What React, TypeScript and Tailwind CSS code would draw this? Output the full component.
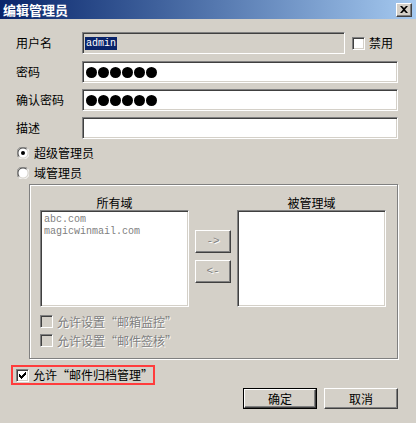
import React from 'react'

const sunken =
  'border border-t-[#808080] border-l-[#808080] border-r-white border-b-white shadow-[inset_1px_1px_0_#404040,inset_-1px_-1px_0_#d4d0c8]'
const raised =
  'border border-t-white border-l-white border-r-[#404040] border-b-[#404040] shadow-[inset_-1px_-1px_0_#808080,inset_1px_1px_0_#d4d0c8]'
const cjk = { fontFamily: '"Noto Sans CJK SC", "Liberation Sans", sans-serif' }
const mono = { fontFamily: '"Liberation Mono", monospace' }

function Checkbox({ checked, disabled }: { checked?: boolean; disabled?: boolean }) {
  return (
    <div className={`w-[13px] h-[13px] shrink-0 ${sunken} ${disabled ? 'bg-[#d4d0c8]' : 'bg-white'} flex items-center justify-center`}>
      {checked && (
        <svg width="7" height="7" viewBox="0 0 7 7">
          <path d="M0 2h1v1h1v1h1V3h1V2h1V1h1V0h1v3H6v1H5v1H4v1H3v1H2V6H1V5H0z" fill="#000" />
        </svg>
      )}
    </div>
  )
}

function Radio({ checked }: { checked?: boolean }) {
  return (
    <svg width="12" height="12" viewBox="0 0 12 12" className="shrink-0">
      <circle cx="6" cy="6" r="5.5" fill="#fff" />
      <path d="M1.6 10.4A6 6 0 0 1 10.4 1.6" stroke="#808080" strokeWidth="1" fill="none" />
      <path d="M2.4 9.6A4.8 4.8 0 0 1 9.6 2.4" stroke="#404040" strokeWidth="1" fill="none" />
      <path d="M10.4 1.6A6 6 0 0 1 1.6 10.4" stroke="#fff" strokeWidth="1" fill="none" />
      <path d="M9.6 2.4A4.8 4.8 0 0 1 2.4 9.6" stroke="#d4d0c8" strokeWidth="1" fill="none" />
      {checked && <circle cx="6" cy="6" r="2" fill="#000" />}
    </svg>
  )
}

function Dots() {
  return (
    <div className="flex gap-px pl-[3px]">
      {[0, 1, 2, 3, 4, 5].map((i) => (
        <span key={i} className="w-[11px] h-[11px] rounded-full bg-black" />
      ))}
    </div>
  )
}

function Row({ label, children, mt }: { label: string; children: React.ReactNode; mt: string }) {
  return (
    <div className={`flex items-center ${mt}`}>
      <span className="w-[66px] pl-[16px] box-content shrink-0 text-[12px] text-black" style={cjk}>
        {label}
      </span>
      {children}
    </div>
  )
}

export default function App() {
  return (
    <div className="w-[416px] h-[423px] bg-[#d4d0c8] overflow-hidden select-none" style={cjk}>
      <div className="h-[19px] flex items-center justify-between pl-[3px] pr-[4px] bg-gradient-to-r from-[#0a246a] to-[#a6caf0]">
        <span className="text-white font-bold text-[13px] leading-none">编辑管理员</span>
        <div className={`w-[16px] h-[14px] bg-[#d4d0c8] ${raised} flex items-center justify-center`}>
          <svg width="8" height="7" viewBox="0 0 8 7">
            <path d="M0 0h2l2 2 2-2h2L5 3.5 8 7H6L4 5 2 7H0l3-3.5z" fill="#000" />
          </svg>
        </div>
      </div>

      <div className="flex flex-col">
        <div className="flex items-center mt-[13px]">
          <Row label="用户名" mt="">
            <div className={`w-[263px] h-[22px] ${sunken} bg-[#d4d0c8] flex items-center pl-[2px]`}>
              <span className="bg-[#0a246a] text-white text-[10px] leading-[13px] px-px" style={mono}>
                admin
              </span>
            </div>
          </Row>
          <div className="ml-[7px] flex items-center gap-[4px]">
            <Checkbox />
            <span className="text-[12px]">禁用</span>
          </div>
        </div>
        <Row label="密码" mt="mt-[7px]">
          <div className={`w-[316px] h-[22px] ${sunken} bg-white flex items-center`}>
            <Dots />
          </div>
        </Row>
        <Row label="确认密码" mt="mt-[6px]">
          <div className={`w-[316px] h-[22px] ${sunken} bg-white flex items-center`}>
            <Dots />
          </div>
        </Row>
        <Row label="描述" mt="mt-[6px]">
          <div className={`w-[316px] h-[22px] ${sunken} bg-white`} />
        </Row>

        <div className="flex items-center gap-[5px] pl-[17px] mt-[6px] h-[16px]">
          <Radio checked />
          <span className="text-[12px]">超级管理员</span>
        </div>
        <div className="flex items-center gap-[5px] pl-[17px] mt-[4px] h-[16px]">
          <Radio />
          <span className="text-[12px]">域管理员</span>
        </div>

        <div className="ml-[29px] mt-[3px] w-[369px] h-[175px] border border-[#808080] shadow-[1px_1px_0_#fff,inset_1px_1px_0_#fff] pt-[10px] pl-[10px]">
          <div className="flex gap-[6px]">
            <div className="flex flex-col w-[149px]">
              <span className="text-[12px] leading-[15px] text-center">所有域</span>
              <div className={`h-[97px] ${sunken} bg-white px-[3px] pt-[3px] text-[10px] leading-[12px] text-[#808080]`} style={mono}>
                <div>abc.com</div>
                <div>magicwinmail.com</div>
              </div>
            </div>
            <div className="flex flex-col gap-[7px] pt-[35px] w-[36px]">
              <div className={`h-[23px] ${raised} bg-[#d4d0c8] flex items-center justify-center text-[11px] text-[#808080] [text-shadow:1px_1px_0_#fff]`} style={mono}>
                -&gt;
              </div>
              <div className={`h-[23px] ${raised} bg-[#d4d0c8] flex items-center justify-center text-[11px] text-[#808080] [text-shadow:1px_1px_0_#fff]`} style={mono}>
                &lt;-
              </div>
            </div>
            <div className="flex flex-col w-[149px]">
              <span className="text-[12px] leading-[15px] text-center">被管理域</span>
              <div className={`h-[97px] ${sunken} bg-white`} />
            </div>
          </div>
          <div className="flex items-center gap-[4px] mt-[8px] h-[13px]">
            <Checkbox disabled />
            <span className="text-[12px] text-[#808080] [text-shadow:1px_1px_0_#fff]">允许设置“邮箱监控”</span>
          </div>
          <div className="flex items-center gap-[4px] mt-[6px] h-[13px]">
            <Checkbox disabled />
            <span className="text-[12px] text-[#808080] [text-shadow:1px_1px_0_#fff]">允许设置“邮件签核”</span>
          </div>
        </div>

        <div className="ml-[11px] mt-[6px] w-[144px] h-[20px] border-2 border-[#ff3c3c] flex items-center gap-[4px] pl-[3px]">
          <Checkbox checked />
          <span className="text-[12px]">允许“邮件归档管理”</span>
        </div>

        <div className="flex justify-end gap-[7px] pr-[18px] mt-[3px]">
          <div className="w-[74px] h-[21px] border border-black">
            <div className={`w-full h-full ${raised} bg-[#d4d0c8] flex items-center justify-center text-[12px]`}>确定</div>
          </div>
          <div className={`w-[74px] h-[21px] ${raised} bg-[#d4d0c8] flex items-center justify-center text-[12px]`}>取消</div>
        </div>
      </div>
    </div>
  )
}
